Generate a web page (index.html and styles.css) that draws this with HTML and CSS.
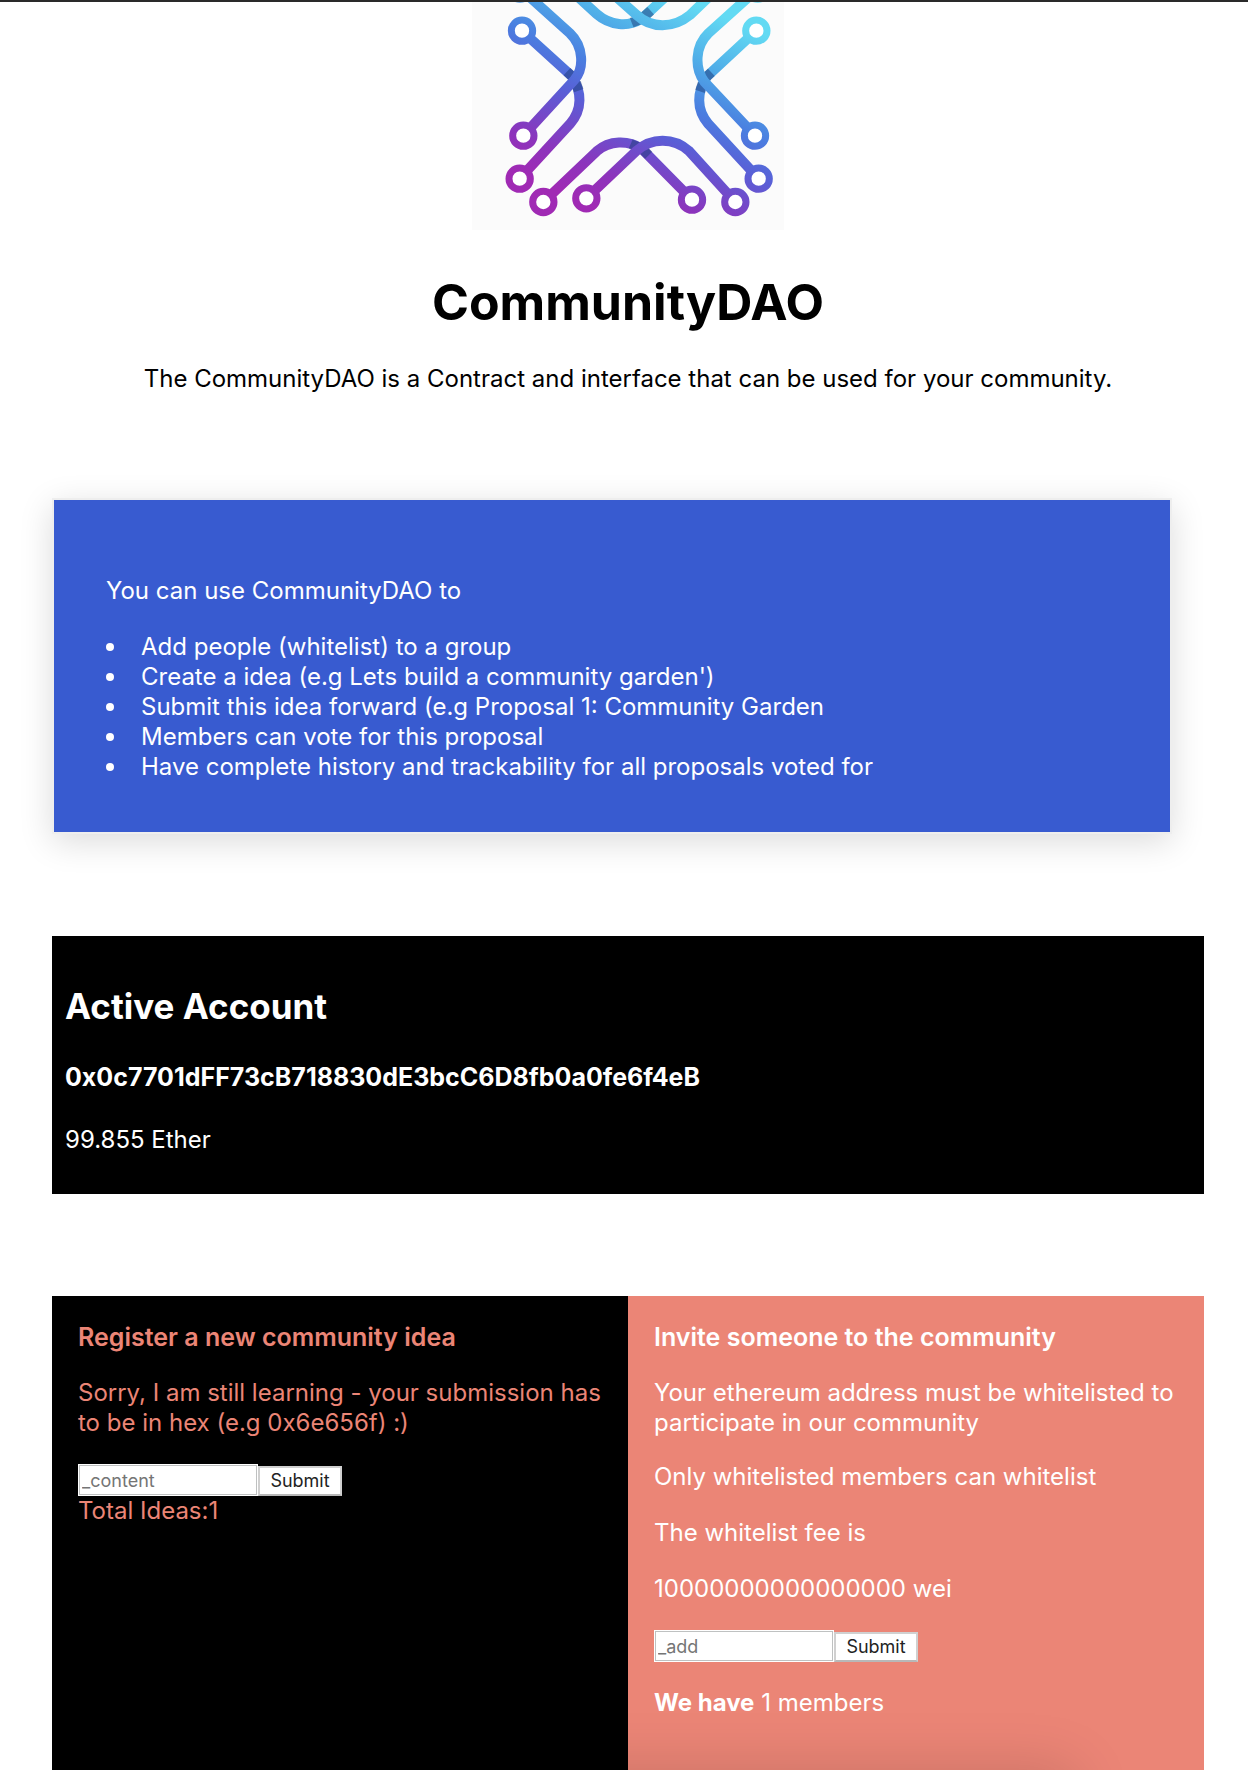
FILE: index.html
```html
<!DOCTYPE html>
<html lang="en">
<head>
<meta charset="utf-8">
<meta name="viewport" content="width=device-width, initial-scale=1">
<title>CommunityDAO</title>
<link rel="stylesheet" href="styles.css">
</head>
<body>
<main class="page">
  <header class="intro">
    <svg class="logo" viewBox="36 6 936 684" role="img" aria-label="CommunityDAO logo">
      <defs>
        <linearGradient id="brand" gradientUnits="userSpaceOnUse" x1="250" y1="553" x2="529" y2="-67">
          <stop offset="0" stop-color="#a02ab4"/>
          <stop offset=".16" stop-color="#8c34bc"/>
          <stop offset=".41" stop-color="#5a5ed6"/>
          <stop offset=".58" stop-color="#4a7ee0"/>
          <stop offset=".78" stop-color="#50aee8"/>
          <stop offset="1" stop-color="#62daf3"/>
        </linearGradient>
      </defs>
      <g fill="none" stroke="url(#brand)" stroke-width="30">
        <path d="M185 92L335 228C366 275 368 328 330 372L179 536"/>
        <path d="M889 92L742 228C710 275 708 328 745 372L896 536"/>
        <path d="M250 606L410 454C448 420 505 420 545 446L696 599"/>
        <path d="M340 -22L410 42C450 77 505 82 545 56L630 -22"/>
      </g>
      <g fill="none" stroke="#1c3a78" stroke-opacity=".5" stroke-width="30">
        <path d="M321 215L338 231M348 248L356 272"/>
        <path d="M754 217L738 232M728 250L720 274"/>
        <path d="M512 432L536 442M548 448L566 466"/>
        <path d="M515 68L540 58M552 50L572 32"/>
      </g>
      <g fill="none" stroke="url(#brand)" stroke-width="30">
        <path d="M190 -26L330 100C370 138 374 205 343 240L190 407"/>
        <path d="M885 -26L745 100C705 138 703 205 733 245L885 407"/>
        <path d="M379 595L530 452C574 413 640 411 686 452L826 606"/>
        <path d="M450 -26L530 45C574 86 640 86 690 45L760 -22"/>
      </g>
      <g fill="#fff" stroke="url(#brand)" stroke-width="21">
        <circle cx="180" cy="-34" r="32"/>
        <circle cx="893" cy="-34" r="32"/>
        <circle cx="186" cy="92" r="32"/>
        <circle cx="889" cy="92" r="32"/>
        <circle cx="190" cy="407" r="32"/>
        <circle cx="885" cy="407" r="32"/>
        <circle cx="179" cy="536" r="32"/>
        <circle cx="896" cy="536" r="32"/>
        <circle cx="250" cy="606" r="32"/>
        <circle cx="826" cy="606" r="32"/>
        <circle cx="379" cy="595" r="32"/>
        <circle cx="696" cy="599" r="32"/>
      </g>
    </svg>
    <h1 class="title">CommunityDAO</h1>
    <p class="tagline">The CommunityDAO is a Contract and interface that can be used for your community.</p>
  </header>

  <section class="features">
    <p class="features-lead">You can use CommunityDAO to</p>
    <ul class="feature-list">
      <li>Add people (whitelist) to a group</li>
      <li>Create a idea (e.g Lets build a community garden')</li>
      <li>Submit this idea forward (e.g Proposal 1: Community Garden</li>
      <li>Members can vote for this proposal</li>
      <li>Have complete history and trackability for all proposals voted for</li>
    </ul>
  </section>

  <section class="account">
    <h2 class="account-title">Active Account</h2>
    <h4 class="account-address">0x0c7701dFF73cB718830dE3bcC6D8fb0a0fe6f4eB</h4>
    <p class="account-balance">99.855 Ether</p>
  </section>

  <div class="cards">
    <section class="card card-idea">
      <h4>Register a new community idea</h4>
      <p>Sorry, I am still learning - your submission has to be in hex (e.g 0x6e656f) :)</p>
      <div>
        <form class="entry">
          <input class="entry-input" type="text" placeholder="_content" aria-label="Idea content">
          <button class="entry-submit" type="submit">Submit</button>
        </form>
        <p>Total Ideas:1</p>
      </div>
    </section>
    <section class="card card-invite">
      <h4>Invite someone to the community</h4>
      <div class="rules">
        <p>Your ethereum address must be whitelisted to participate in our community</p>
        <p>Only whitelisted members can whitelist</p>
      </div>
      <p>The whitelist fee is</p>
      <p>10000000000000000 wei</p>
      <form class="entry">
        <input class="entry-input" type="text" placeholder="_add" aria-label="Member address">
        <button class="entry-submit" type="submit">Submit</button>
      </form>
      <p><strong>We have</strong> 1 members</p>
    </section>
  </div>
</main>
</body>
</html>
```

FILE: styles.css
```css
* {
  box-sizing: border-box;
}

body {
  margin: 0;
  background: #fff;
  color: #000;
  font-family: Inter, "Liberation Sans", sans-serif;
  font-size: 24px;
  line-height: 30px;
}

h1, h2, h4, p, ul {
  margin: 0;
}

h4 {
  font-size: 25px;
  font-weight: 600;
}

strong {
  font-weight: 700;
}

.page {
  display: flex;
  flex-direction: column;
  gap: 102px;
  min-height: 100vh;
  padding: 0 44px 0 52px;
  border-top: 2px solid #2a2a2a;
}

.intro {
  display: flex;
  flex-direction: column;
  align-items: center;
  padding-bottom: 2px;
  text-align: center;
}

.logo {
  width: 312px;
  background: #fbfbfb;
}

.title {
  margin: 42px 0 32px;
  font-size: 50px;
  font-weight: 700;
  line-height: 60px;
}

.features {
  margin-right: 32px;
  padding: 76px 52px 50px;
  border: 2px solid #eee;
  background: #385bd0;
  background-clip: padding-box;
  box-shadow: 0 8px 32px rgba(0, 0, 0, .14);
  color: #fff;
}

.feature-list {
  margin-top: 26px;
  padding: 0;
  list-style: none;
}

.feature-list li {
  display: flex;
  align-items: center;
  gap: 27px;
}

.feature-list li::before {
  content: "";
  flex: none;
  width: 8px;
  height: 8px;
  border-radius: 50%;
  background: #fff;
}

.account {
  display: flex;
  flex-direction: column;
  gap: 33px;
  padding: 48px 13px 39px;
  background: #000;
  color: #fff;
}

.account-title {
  font-size: 35px;
  font-weight: 700;
  line-height: 45px;
}

.account-address {
  font-weight: 700;
}

.cards {
  flex: 1;
  display: grid;
  grid-template-columns: 1fr 1fr;
}

.card {
  display: flex;
  flex-direction: column;
  gap: 26px;
  padding: 26px;
}

.card-idea {
  background: #000;
  color: #eb8576;
}

.card-invite {
  position: relative;
  overflow: hidden;
  background: #eb8576;
  color: #fff;
}

/* soft shade rising from the bottom edge */
.card-invite::after {
  content: "";
  position: absolute;
  top: 100%;
  right: 130px;
  left: -100px;
  height: 200px;
  box-shadow: 0 0 56px rgba(0, 0, 0, .15);
}

.rules {
  display: grid;
  gap: 24px;
}

.entry {
  display: flex;
  align-items: flex-end;
}

.entry-input,
.entry-submit {
  margin: 0;
  border-radius: 0;
  background: #fff;
  font-family: inherit;
  font-size: 18px;
  line-height: 22px;
}

.entry-input {
  width: 180px;
  height: 32px;
  padding: 0 2px;
  border: 2px solid #bfc1c1;
  outline: 1px solid #fff;
  outline-offset: -1px;
}

.entry-input::placeholder {
  color: #757575;
  opacity: 1;
}

.entry-submit {
  width: 84px;
  height: 30px;
  padding: 0;
  border: 2px solid #d0d0d0;
  border-bottom-color: #b8b8b8;
  color: #222;
}
```
